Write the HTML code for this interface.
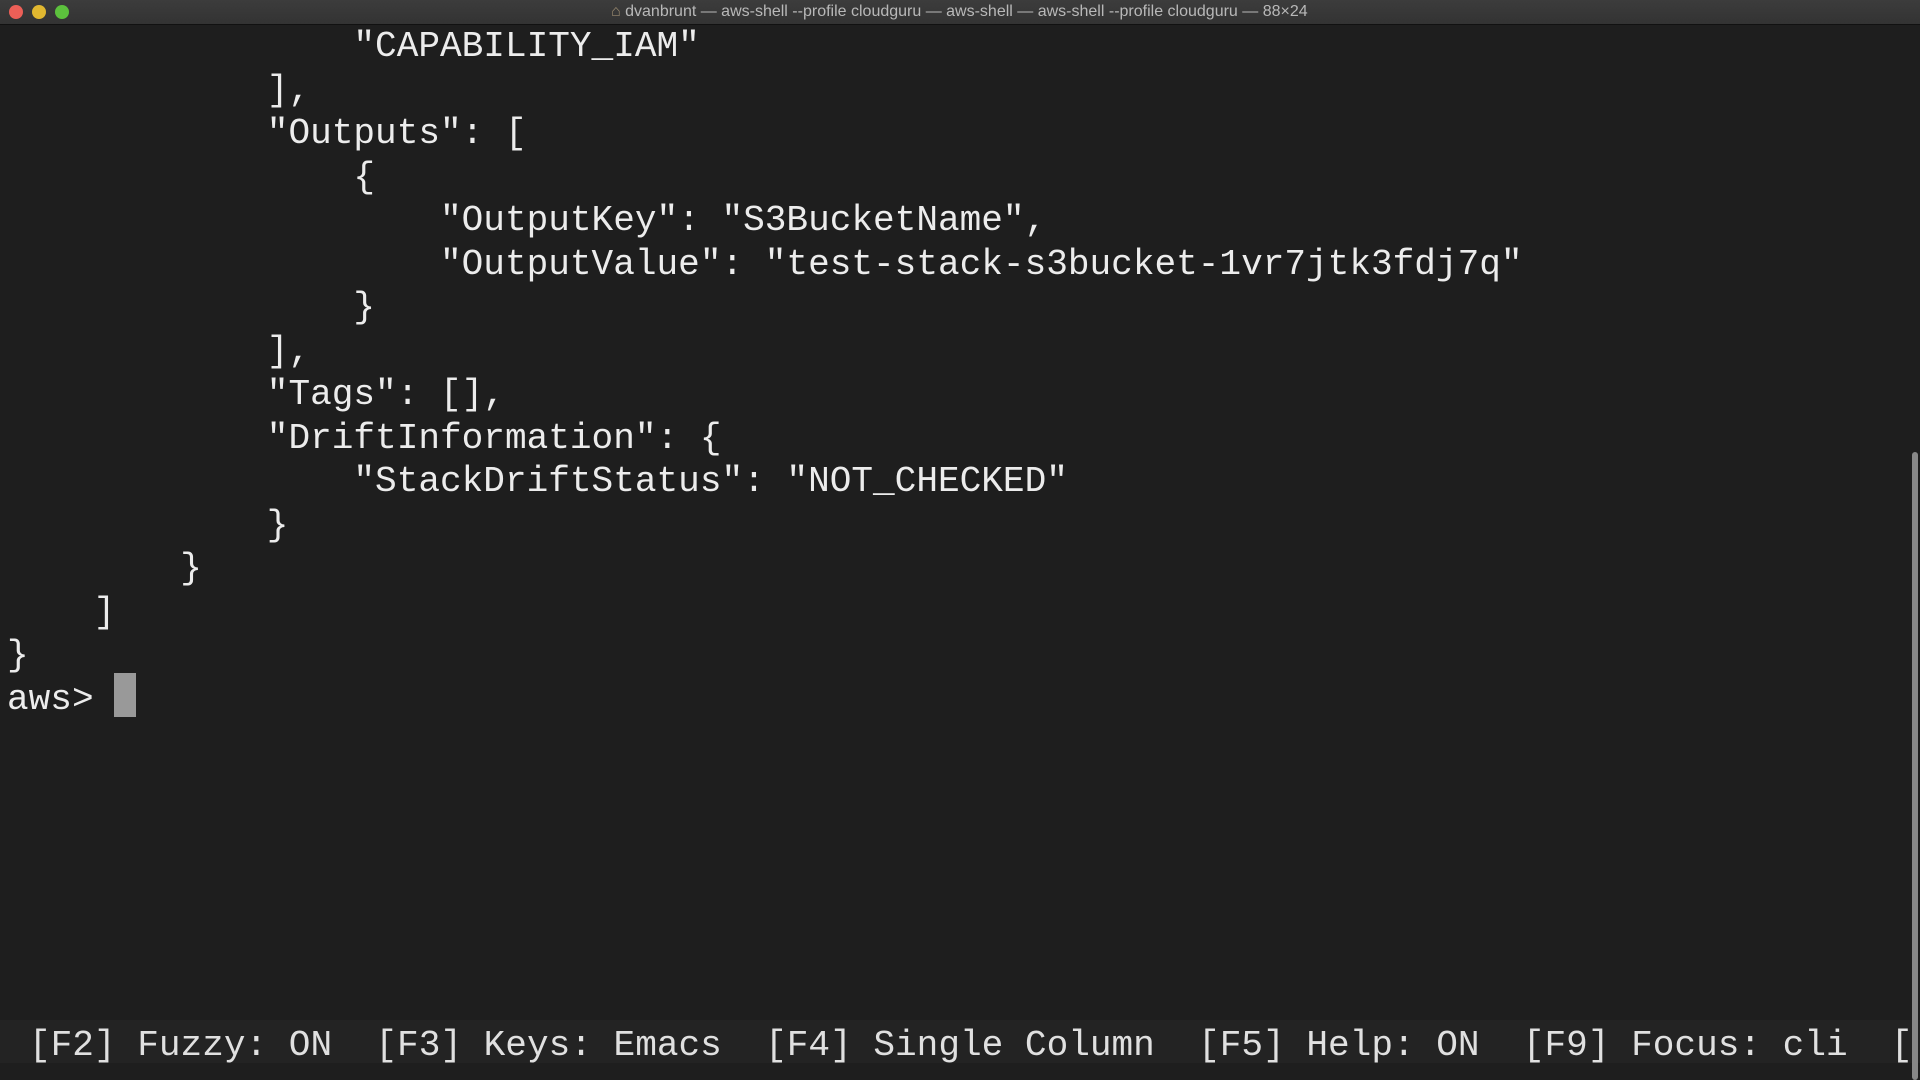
<!DOCTYPE html>
<html><head><meta charset="utf-8"><style>
html,body{margin:0;padding:0;width:1920px;height:1080px;overflow:hidden;background:#1e1e1e;}
#tb{position:absolute;left:0;top:0;width:1920px;height:24px;background:linear-gradient(#3c3c3c,#333);border-bottom:1px solid #111;}
.dot{position:absolute;top:5px;width:14px;height:14px;border-radius:50%;}
#title{position:absolute;top:3px;left:611px;font:16px "Liberation Sans",sans-serif;color:#b8b8b8;white-space:nowrap;}
.l{position:absolute;left:7px;font-family:"Liberation Mono",monospace;font-size:36.1px;line-height:44px;color:#ececec;white-space:pre;}
#sb{position:absolute;left:0;top:1020px;width:1920px;height:43px;background:#232323;}
#scroll{position:absolute;left:1912px;top:452px;width:6px;height:628px;background:#888;border-radius:3px;}
</style></head><body>
<div id="tb">
<div class="dot" style="left:9px;background:#ec5f57"></div>
<div class="dot" style="left:32px;background:#e0b730"></div>
<div class="dot" style="left:55px;background:#5cc13d"></div>
<div id="title"><span style="color:#9a8a70">⌂</span> dvanbrunt — aws-shell --profile cloudguru — aws-shell — aws-shell --profile cloudguru — 88×24</div>
</div>
<div class="l" style="top:25px">                "CAPABILITY_IAM"</div>
<div class="l" style="top:68.5px">            ],</div>
<div class="l" style="top:112px">            "Outputs": [</div>
<div class="l" style="top:155.5px">                {</div>
<div class="l" style="top:199px">                    "OutputKey": "S3BucketName",</div>
<div class="l" style="top:242.5px">                    "OutputValue": "test-stack-s3bucket-1vr7jtk3fdj7q"</div>
<div class="l" style="top:286px">                }</div>
<div class="l" style="top:329.5px">            ],</div>
<div class="l" style="top:373px">            "Tags": [],</div>
<div class="l" style="top:416.5px">            "DriftInformation": {</div>
<div class="l" style="top:460px">                "StackDriftStatus": "NOT_CHECKED"</div>
<div class="l" style="top:503.5px">            }</div>
<div class="l" style="top:547px">        }</div>
<div class="l" style="top:590.5px">    ]</div>
<div class="l" style="top:634px">}</div>
<div class="l" style="top:677.5px">aws> </div>
<div style="position:absolute;left:114px;top:673px;width:22px;height:44px;background:#999"></div>
<div id="sb"></div>
<div class="l" style="top:1024px;left:29px;color:#e0e0e0">[F2] Fuzzy: ON  [F3] Keys: Emacs  [F4] Single Column  [F5] Help: ON  [F9] Focus: cli  [</div>
<div id="scroll"></div>
</body></html>
